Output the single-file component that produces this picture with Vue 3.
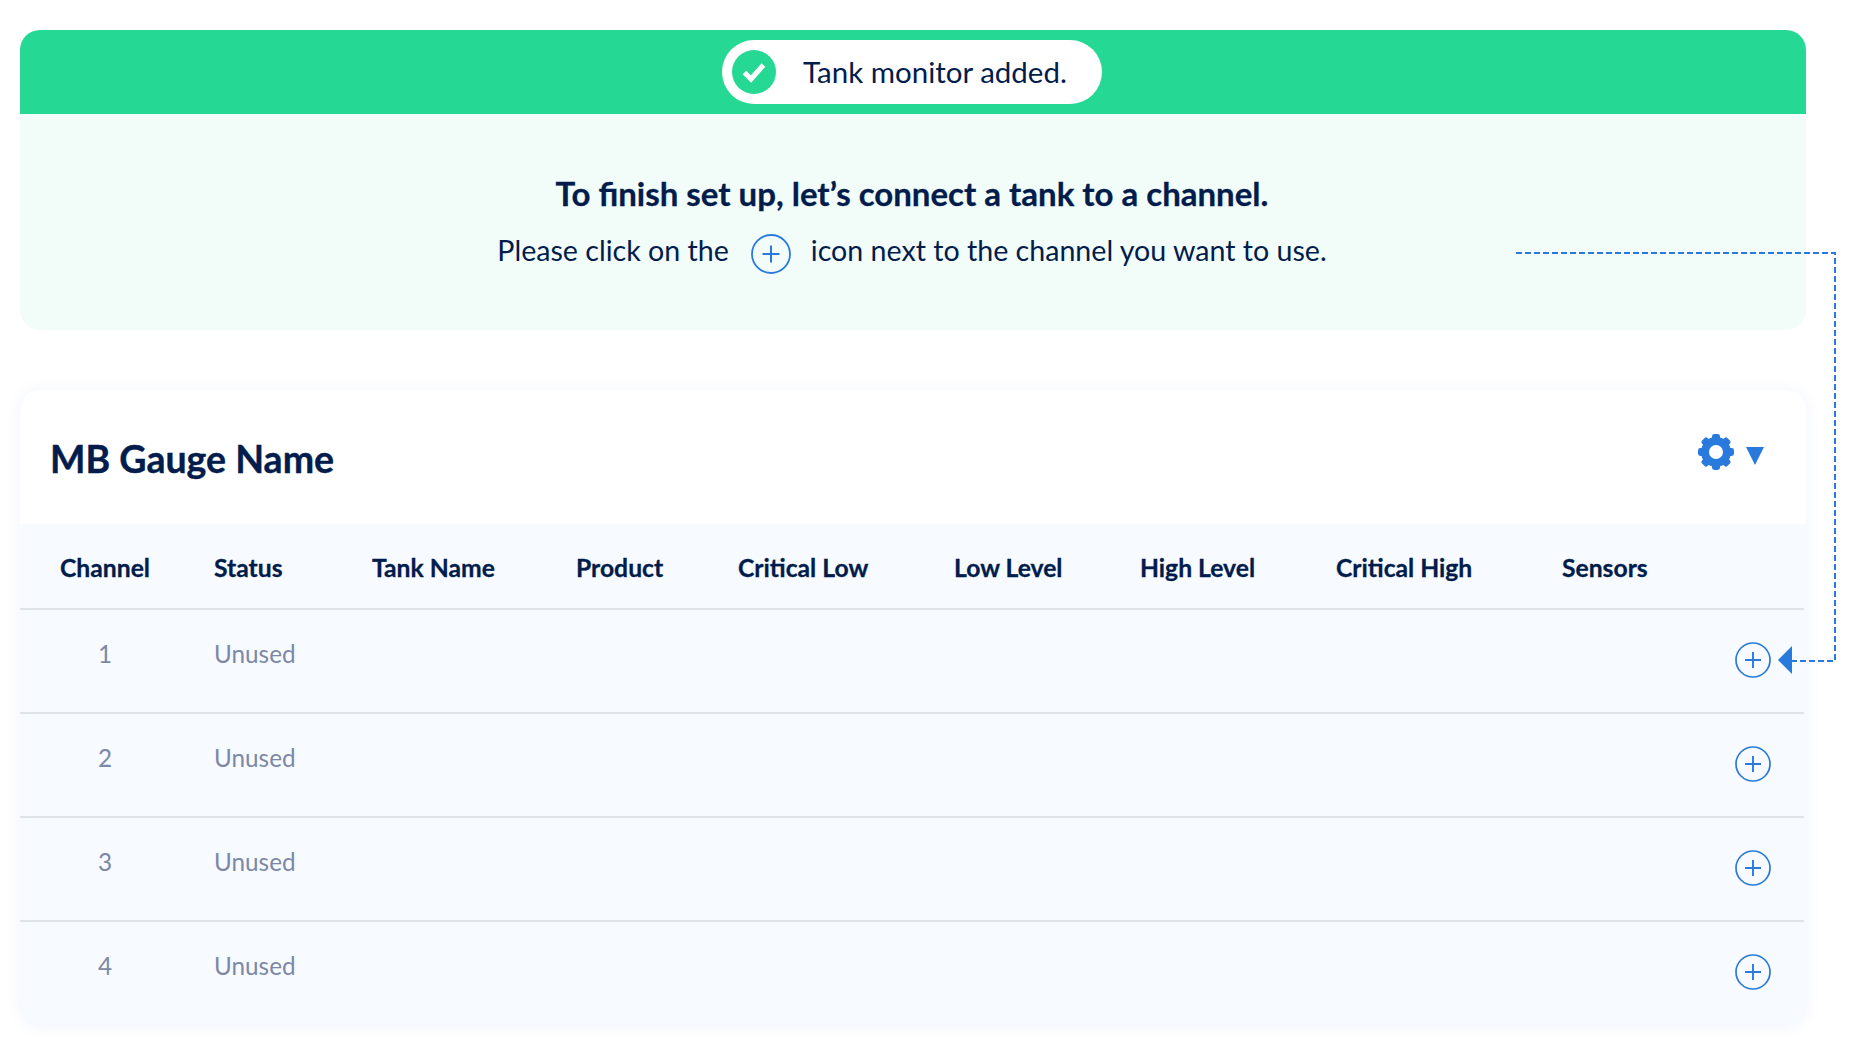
<script setup>
const columns = ['Status', 'Tank Name', 'Product', 'Critical Low', 'Low Level', 'High Level', 'Critical High', 'Sensors']
const rows = [1, 2, 3, 4]
const teeth = [0, 45, 90, 135, 180, 225, 270, 315]
</script>

<template>
  <div class="page">
    <section class="notice">
      <div class="banner">
        <div class="toast">
          <svg class="check" viewBox="0 0 44 44">
            <circle cx="22" cy="22" r="22" fill="#25d894" />
            <path d="M12.5 22.5l6.5 6.5 12.5-14" fill="none" stroke="#fff" stroke-width="5" />
          </svg>
          <span class="toast-text">Tank monitor added.</span>
        </div>
      </div>
      <div class="instructions">
        <h2>To finish set up, let’s connect a tank to a channel.</h2>
        <p>
          <span>Please click on the</span>
          <svg class="plus inline" viewBox="0 0 40 40">
            <circle cx="20" cy="20" r="19" fill="none" stroke="#2a7ade" stroke-width="1.8" />
            <path d="M11.5 20h17M20 11.5v17" fill="none" stroke="#2a7ade" stroke-width="2" />
          </svg>
          <span>icon next to the channel you want to use.</span>
        </p>
      </div>
    </section>

    <section class="card">
      <header class="card-head">
        <h1>MB Gauge Name</h1>
        <div class="settings">
          <svg class="gear" viewBox="0 0 36 36">
            <g fill="#2a7ade">
              <rect v-for="t in teeth" :key="t" x="14" y="0" width="8" height="8" rx="2.4" :transform="`rotate(${t} 18 18)`" />
            </g>
            <circle cx="18" cy="18" r="11" fill="none" stroke="#2a7ade" stroke-width="8" />
          </svg>
          <span class="caret"></span>
        </div>
      </header>
      <div class="grid head">
        <div class="cell center">Channel</div>
        <div v-for="c in columns" :key="c" class="cell">{{ c }}</div>
      </div>
      <div v-for="r in rows" :key="r" class="grid row">
        <div class="cell center">{{ r }}</div>
        <div class="cell">Unused</div>
        <svg class="plus action" viewBox="0 0 36 36">
          <circle cx="18" cy="18" r="17" fill="none" stroke="#2a7ade" stroke-width="1.7" />
          <path d="M10 18h16M18 10v16" fill="none" stroke="#2a7ade" stroke-width="1.9" />
        </svg>
      </div>
    </section>

    <svg class="connector" width="1856" height="1050" viewBox="0 0 1856 1050">
      <path d="M1516 253H1835V661H1792" fill="none" stroke="#2a7ade" stroke-width="2" stroke-dasharray="6 3" />
      <path d="M1778 660L1792 646V674Z" fill="#2a7ade" />
    </svg>
  </div>
</template>

<style scoped>
.page {
  position: relative;
  width: 1856px;
  height: 1050px;
  padding: 30px 50px 0 20px;
  box-sizing: border-box;
  font-family: Lato, "Liberation Sans", sans-serif;
  color: #021c4c;
  background: #fff;
  overflow: hidden;
}
.notice {
  height: 300px;
  border-radius: 20px;
  overflow: hidden;
  background: #f2fcf9;
}
.banner {
  height: 84px;
  box-sizing: border-box;
  padding-right: 2px;
  background: #25d894;
  display: flex;
  justify-content: center;
  align-items: center;
}
.toast {
  width: 380px;
  height: 64px;
  box-sizing: border-box;
  border-radius: 32px;
  background: #fff;
  display: flex;
  align-items: center;
  gap: 27px;
  padding-left: 10px;
  font-size: 29.5px;
}
.toast-text { margin-top: -2px; }
.check { width: 44px; height: 44px; }
.instructions {
  text-align: center;
  padding: 59px 2px 0 0;
}
.instructions h2 {
  margin: 0;
  font-size: 33px;
  line-height: 40px;
  font-weight: 700;
  -webkit-text-stroke: 0.3px #021c4c;
}
.instructions p {
  margin: 12px 0 0;
  font-size: 28.6px;
  line-height: 40px;
  display: flex;
  justify-content: center;
  align-items: center;
  gap: 21px;
}
.plus.inline { width: 40px; height: 40px; margin: 9px -1px 0 1px; }
.card {
  margin-top: 60px;
  height: 634px;
  border-radius: 20px;
  background: #f7faff;
  overflow: hidden;
  box-shadow: 0 2px 16px rgba(90, 120, 220, 0.09);
}
.card-head {
  height: 134px;
  background: #fff;
  display: flex;
  align-items: center;
  justify-content: space-between;
  padding: 0 42px 0 30px;
}
.card-head h1 {
  margin: 2px 0 0;
  font-size: 37.5px;
  font-weight: 700;
  -webkit-text-stroke: 0.4px #021c4c;
}
.settings {
  display: flex;
  align-items: center;
  gap: 12px;
  margin-top: -11px;
}
.gear { width: 36px; height: 36px; display: block; }
.caret {
  width: 0;
  height: 0;
  border-left: 9px solid transparent;
  border-right: 9px solid transparent;
  border-top: 18px solid #2a7ade;
  margin-top: 9px;
}
.grid {
  display: grid;
  grid-template-columns: 170px 158px 204px 162px 216px 186px 196px 226px 1fr;
  position: relative;
}
.grid::after {
  content: "";
  position: absolute;
  left: 0;
  right: 2px;
  bottom: 0;
  height: 2px;
  background: #dfe3ea;
}
.row:last-child::after { display: none; }
.cell { padding-left: 24px; }
.cell.center { padding-left: 0; text-align: center; }
.head {
  height: 86px;
  align-items: center;
  font-size: 24.7px;
  font-weight: 700;
  -webkit-text-stroke: 0.3px #021c4c;
}
.row {
  height: 104px;
  box-sizing: border-box;
  font-size: 24.3px;
  color: #7c88a6;
  padding-top: 28px;
  line-height: 32px;
}
.action {
  position: absolute;
  left: 1715px;
  top: 32px;
  width: 36px;
  height: 36px;
}
.connector {
  position: absolute;
  left: 0;
  top: 0;
  pointer-events: none;
}
</style>
